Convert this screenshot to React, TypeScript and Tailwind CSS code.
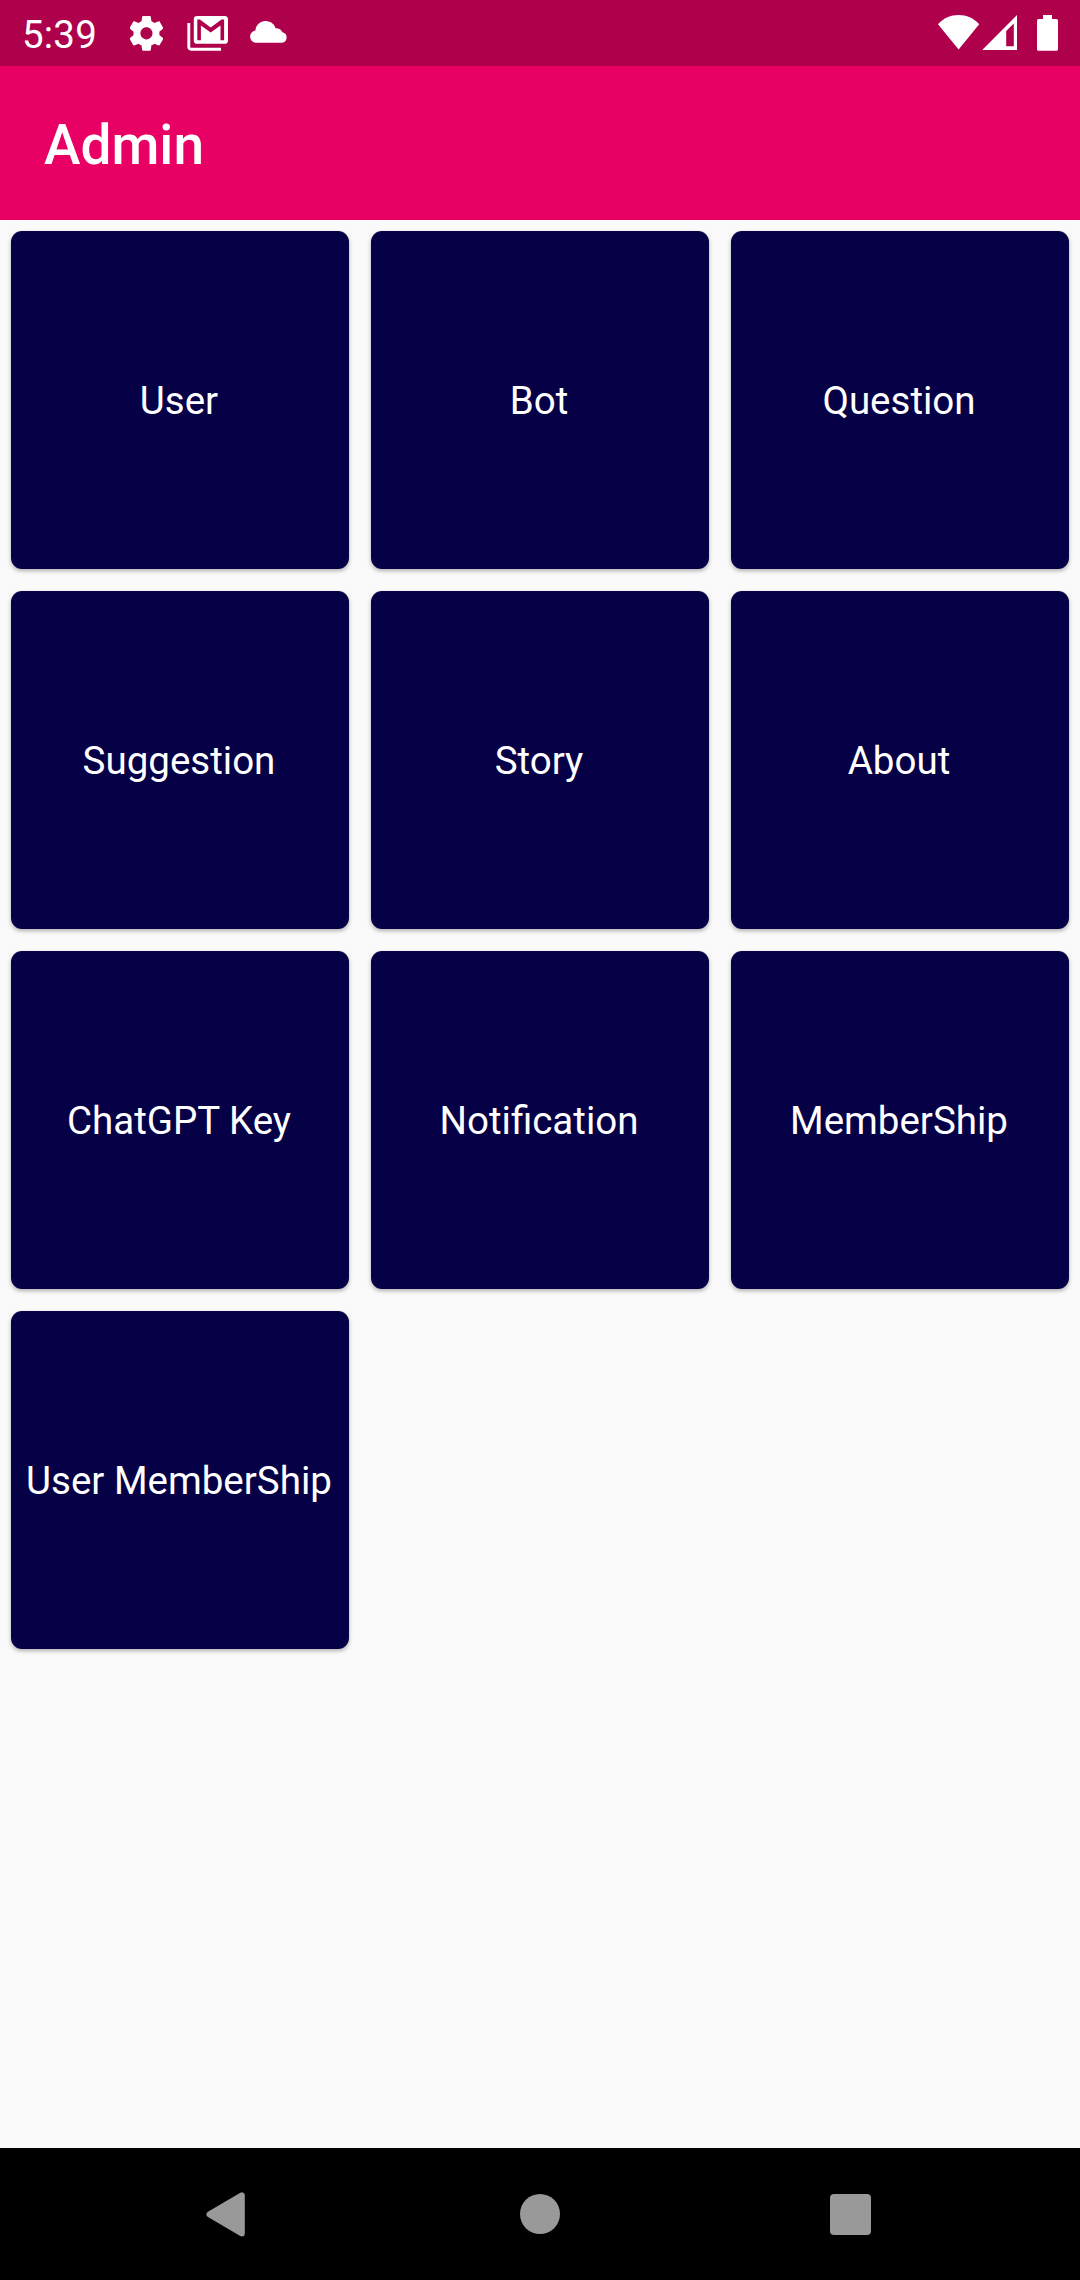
const sections = [
  "User",
  "Bot",
  "Question",
  "Suggestion",
  "Story",
  "About",
  "ChatGPT Key",
  "Notification",
  "MemberShip",
  "User MemberShip",
];

function StatusBar() {
  return (
    <div className="flex h-[66px] items-center justify-between bg-[#ae004b] px-[22px] text-white">
      <div className="flex h-full items-center">
        <span className="w-[108px] pt-[3px] text-[38.5px] leading-[46px] tracking-[0.2px]">5:39</span>

        {/* Settings */}
        <svg className="h-[66px] w-[33px] shrink-0" viewBox="130 0 33 66" fill="currentColor">
          <path
            transform="translate(125.7 12.6) scale(1.73)"
            d="M19.43 12.98c.04-.32.07-.64.07-.98s-.03-.66-.07-.98l2.11-1.65c.19-.15.24-.42.12-.64l-2-3.46c-.12-.22-.39-.3-.61-.22l-2.49 1c-.52-.4-1.08-.73-1.69-.98l-.38-2.65A.488.488 0 0 0 14 2h-4c-.25 0-.46.18-.49.42l-.38 2.65c-.61.25-1.17.59-1.69.98l-2.49-1c-.23-.09-.49 0-.61.22l-2 3.46c-.13.22-.07.49.12.64l2.11 1.65c-.04.32-.07.65-.07.98s.03.66.07.98l-2.11 1.65c-.19.15-.24.42-.12.64l2 3.46c.12.22.39.3.61.22l2.49-1c.52.4 1.08.73 1.69.98l.38 2.65c.03.24.24.42.49.42h4c.25 0 .46-.18.49-.42l.38-2.65c.61-.25 1.17-.59 1.69-.98l2.49 1c.23.09.49 0 .61-.22l2-3.46c.12-.22.07-.49-.12-.64l-2.11-1.65zM12 15.5c-1.93 0-3.5-1.57-3.5-3.5s1.57-3.5 3.5-3.5 3.5 1.57 3.5 3.5-1.57 3.5-3.5 3.5z"
          />
        </svg>

        {/* Mail stack */}
        <svg className="ml-[23px] h-[66px] w-[43px] shrink-0" viewBox="186 0 43 66" fill="none">
          <path d="M188.8 23v24a2.2 2.2 0 0 0 2.2 2.2h30" stroke="currentColor" strokeWidth="2.9" />
          <rect x="193.8" y="16" width="34.2" height="27.8" rx="3.4" fill="currentColor" />
          <path
            d="M197.3 19.4h2.6l10.8 8.2 10.8-8.2h2.6v20.8h-3.6V25.4l-9.8 7.2-9.8-7.2v14.8h-3.6z"
            fill="#ae004b"
          />
        </svg>

        {/* Cloud */}
        <svg className="ml-[20px] h-[66px] w-[40px] shrink-0" viewBox="249 0 40 66" fill="currentColor">
          <path d="M255.8 42.8a6.2 6.2 0 0 1-.5-12.3A10.4 10.4 0 0 1 275.6 28.2 7 7 0 0 1 282.4 32.2 5.4 5.4 0 0 1 282 42.8z" />
        </svg>
      </div>

      <div className="flex h-full items-center">
        {/* Wifi */}
        <svg className="h-[66px] w-[42px]" viewBox="938 0 42 66" fill="currentColor">
          <path d="M958.6 49.6 938 24.2C943.6 18 950.6 15 958.6 15s15 3 20.6 9.2z" />
        </svg>
        {/* Cell signal */}
        <svg className="ml-[2px] h-[66px] w-[35px]" viewBox="982 0 35 66" fill="currentColor">
          <path fillRule="evenodd" d="M982.2 50 1017 15v35zM1006.2 30.9v15.4h7.6V23.4z" />
        </svg>
        {/* Battery */}
        <svg className="ml-[20px] h-[66px] w-[21px]" viewBox="1037 0 21 66" fill="currentColor">
          <path d="M1043 15h9v4h4.4a1.6 1.6 0 0 1 1.6 1.6v28.6a1.6 1.6 0 0 1-1.6 1.6h-17.8a1.6 1.6 0 0 1-1.6-1.6V20.6a1.6 1.6 0 0 1 1.6-1.6h4.4z" />
        </svg>
      </div>
    </div>
  );
}

function NavigationBar() {
  return (
    <nav className="flex h-[132px] items-center bg-black pl-[206px] text-[#999999]">
      <button aria-label="Back">
        <svg className="h-[46px] w-[40px]" viewBox="0 0 40 46" fill="currentColor">
          <path
            d="M3.5 23.4 35.8 4.3v38.2z"
            stroke="currentColor"
            strokeWidth="6"
            strokeLinejoin="round"
          />
        </svg>
      </button>
      <button aria-label="Home" className="ml-[274px] size-10 rounded-full bg-[#999999]" />
      <button aria-label="Recents" className="ml-[270px] size-[41px] rounded-[4px] bg-[#999999]" />
    </nav>
  );
}

export default function App() {
  return (
    <div className="flex h-[2280px] w-[1080px] flex-col bg-[#fafafa] font-[Roboto,sans-serif]">
      <StatusBar />

      <header className="flex h-[154px] items-center bg-[#e90064] px-11 pt-[3px]">
        <h1 className="text-[55px] font-medium leading-[64px] text-white">Admin</h1>
      </header>

      <main className="grid flex-1 grid-cols-3 content-start gap-[22px] p-[11px]">
        {sections.map((name) => (
          <button
            key={name}
            className="flex h-[338px] items-center justify-center whitespace-nowrap rounded-[11px] bg-[#060047] pr-[2px] pt-[2px] text-[38.5px] text-white shadow-[0_2px_4px_rgba(0,0,0,0.3)]"
          >
            {name}
          </button>
        ))}
      </main>

      <NavigationBar />
    </div>
  );
}
